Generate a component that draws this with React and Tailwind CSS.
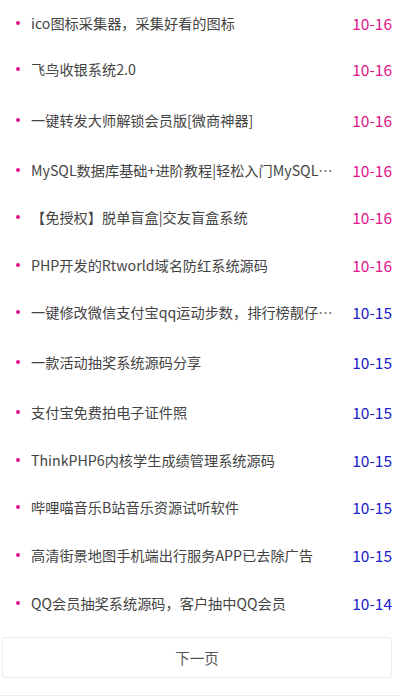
import React from "react";

const rows = [
  ["ico图标采集器，采集好看的图标", "10-16", 45],
  ["飞鸟收银系统2.0", "10-16", 48],
  ["一键转发大师解锁会员版[微商神器]", "10-16", 53],
  ["MySQL数据库基础+进阶教程|轻松入门MySQL数据库", "10-16", 47],
  ["【免授权】脱单盲盒|交友盲盒系统", "10-16", 48],
  ["PHP开发的Rtworld域名防红系统源码", "10-16", 47],
  ["一键修改微信支付宝qq运动步数，排行榜靓仔必备", "10-15", 47],
  ["一款活动抽奖系统源码分享", "10-15", 53],
  ["支付宝免费拍电子证件照", "10-15", 48],
  ["ThinkPHP6内核学生成绩管理系统源码", "10-15", 47],
  ["哔哩喵音乐B站音乐资源试听软件", "10-15", 48],
  ["高清街景地图手机端出行服务APP已去除广告", "10-15", 47],
  ["QQ会员抽奖系统源码，客户抽中QQ会员", "10-14", 49],
];

const hMap = { 45: "h-[45px]", 47: "h-[47px]", 48: "h-[48px]", 49: "h-[49px]", 53: "h-[53px]" };

export default function App() {
  return (
    <div
      className="w-[400px] h-[700px] bg-white overflow-hidden relative"
      style={{ fontFamily: '"Noto Sans CJK SC", "Noto Sans", sans-serif' }}
    >
      <ul className="flex flex-col">
        {rows.map(([t, d, h], i) => (
          <li key={i} className={`flex items-center ${hMap[h]} pl-[16px] pr-[8px]`}>
            <span className="w-[4px] h-[4px] rounded-full bg-[#e0148a] shrink-0" />
            <span className="ml-[11px] flex-1 min-w-0 mr-[14px] truncate text-[14.2px] text-[#444] leading-[20px]">
              {t}
            </span>
            <span
              className={`shrink-0 text-[15.5px] leading-[20px] ${
                d === "10-16" ? "text-[#e0148a]" : "text-[#2020c8]"
              }`}
            >
              {d}
            </span>
          </li>
        ))}
      </ul>
      <div className="mt-[10px] ml-[2px] mr-[8px] h-[41px] border border-[#ececec] rounded-[3px] flex items-center justify-center text-[14.5px] text-[#555]">
        下一页
      </div>
      <div className="mt-[17px] border-t border-[#ececec]" />
    </div>
  );
}
